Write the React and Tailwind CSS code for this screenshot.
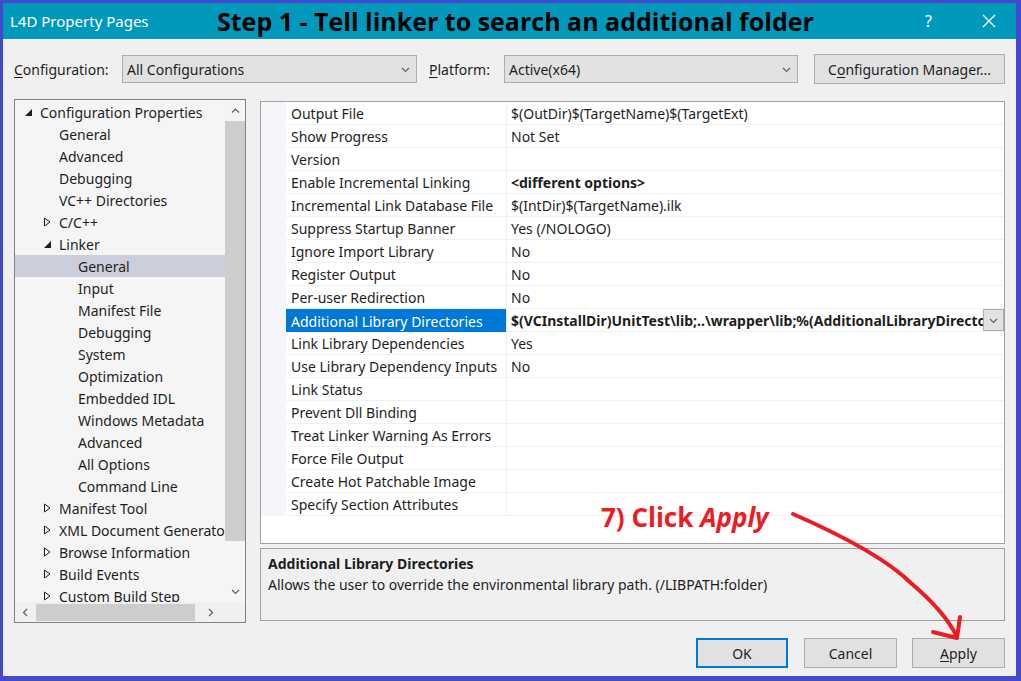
import React from "react";

const tree = [
  { l: 0, t: "Configuration Properties", e: "open" },
  { l: 1, t: "General" },
  { l: 1, t: "Advanced" },
  { l: 1, t: "Debugging" },
  { l: 1, t: "VC++ Directories" },
  { l: 1, t: "C/C++", e: "closed" },
  { l: 1, t: "Linker", e: "open" },
  { l: 2, t: "General", sel: true },
  { l: 2, t: "Input" },
  { l: 2, t: "Manifest File" },
  { l: 2, t: "Debugging" },
  { l: 2, t: "System" },
  { l: 2, t: "Optimization" },
  { l: 2, t: "Embedded IDL" },
  { l: 2, t: "Windows Metadata" },
  { l: 2, t: "Advanced" },
  { l: 2, t: "All Options" },
  { l: 2, t: "Command Line" },
  { l: 1, t: "Manifest Tool", e: "closed" },
  { l: 1, t: "XML Document Generator", e: "closed" },
  { l: 1, t: "Browse Information", e: "closed" },
  { l: 1, t: "Build Events", e: "closed" },
  { l: 1, t: "Custom Build Step", e: "closed" },
  { l: 1, t: "Code Analysis", e: "closed" },
];

const indent = { 0: "pl-[9px]", 1: "pl-[28px]", 2: "pl-[47px]" };

const props = [
  ["Output File", "$(OutDir)$(TargetName)$(TargetExt)"],
  ["Show Progress", "Not Set"],
  ["Version", ""],
  ["Enable Incremental Linking", "<different options>", true],
  ["Incremental Link Database File", "$(IntDir)$(TargetName).ilk"],
  ["Suppress Startup Banner", "Yes (/NOLOGO)"],
  ["Ignore Import Library", "No"],
  ["Register Output", "No"],
  ["Per-user Redirection", "No"],
  [
    "Additional Library Directories",
    "$(VCInstallDir)UnitTest\\lib;..\\wrapper\\lib;%(AdditionalLibraryDirectories)",
    true,
    true,
  ],
  ["Link Library Dependencies", "Yes"],
  ["Use Library Dependency Inputs", "No"],
  ["Link Status", ""],
  ["Prevent Dll Binding", ""],
  ["Treat Linker Warning As Errors", ""],
  ["Force File Output", ""],
  ["Create Hot Patchable Image", ""],
  ["Specify Section Attributes", ""],
];

function Chevron({ dir = "down", color = "#606060", size = 9 }) {
  const pts = {
    down: "1,3 4.5,6.5 8,3",
    up: "1,6.5 4.5,3 8,6.5",
    left: "6,1 2.5,4.5 6,8",
    right: "3,1 6.5,4.5 3,8",
  }[dir];
  return (
    <svg width={size} height={size} viewBox="0 0 9 9">
      <polyline points={pts} fill="none" stroke={color} strokeWidth="1.2" />
    </svg>
  );
}

function Expander({ kind }) {
  if (kind === "open")
    return (
      <svg width="9" height="9" viewBox="0 0 9 9">
        <polygon points="8,1 8,8 1,8" fill="#1e1e1e" />
      </svg>
    );
  if (kind === "closed")
    return (
      <svg width="9" height="10" viewBox="0 0 9 10">
        <polygon points="1.5,1 7,5 1.5,9" fill="none" stroke="#1e1e1e" strokeWidth="1" />
      </svg>
    );
  return <span className="w-[9px]" />;
}

function Combo({ value, width }) {
  return (
    <div
      className={`${width} h-[28px] bg-[#e1e1e1] border border-[#adadad] flex items-center pl-[4px] pr-[6px] pt-px`}
    >
      <span className="flex-1">{value}</span>
      <Chevron />
    </div>
  );
}

function Button({ children, primary, width = "w-[93px]" }) {
  return (
    <div
      className={`${width} h-[30px] bg-[#e1e1e1] flex items-center justify-center ${
        primary ? "border-2 border-[#0078d7]" : "border border-[#adadad]"
      }`}
    >
      {children}
    </div>
  );
}

export default function App() {
  return (
    <div className="relative w-[1021px] h-[681px] flex flex-col border-l-[3px] border-t-[3px] border-r-[5px] border-b-[5px] border-[#4349cf] text-[14px] text-[#1e1e1e] font-['Noto_Sans','Open_Sans',sans-serif] overflow-hidden">
      {/* title bar */}
      <div className="h-[36px] bg-[#0099bc] flex items-center shrink-0">
        <div className="w-[214px] pl-[7px] text-white text-[15px]">L4D Property Pages</div>
        <div className="text-black font-bold text-[25px] leading-none font-['Open_Sans',sans-serif]">
          Step 1 - Tell linker to search an additional folder
        </div>
        <div className="flex-1" />
        <div className="text-white text-[16px] mr-[50px]">?</div>
        <svg width="14" height="14" viewBox="0 0 14 14" className="mr-[20px]">
          <path d="M1 1 L13 13 M13 1 L1 13" stroke="white" strokeWidth="1.3" />
        </svg>
      </div>

      <div className="flex-1 bg-[#f0f0f0] flex flex-col pl-[11px] pr-[11px]">
        {/* configuration row */}
        <div className="mt-[15px] h-[30px] flex items-center">
          <div className="w-[108px] pt-px">
            <span className="underline underline-offset-2">C</span>onfiguration:
          </div>
          <Combo value="All Configurations" width="w-[295px]" />
          <div className="ml-[12px] w-[75px] pt-px">
            <span className="underline underline-offset-2">P</span>latform:
          </div>
          <Combo value="Active(x64)" width="w-[294px]" />
          <div className="flex-1" />
          <Button width="w-[191px]">
            <span>
              C<span className="underline underline-offset-2">o</span>nfiguration Manager...
            </span>
          </Button>
        </div>

        {/* main area */}
        <div className="mt-[15px] flex">
          {/* tree */}
          <div className="w-[232px] h-[524px] border border-[#828282] bg-[#f5f5f5] flex flex-col">
            <div className="flex-1 flex min-h-0">
              <div className="flex-1 overflow-hidden pt-px">
                {tree.map((n, i) => (
                  <div
                    key={i}
                    className={`h-[22px] flex items-center whitespace-nowrap ${indent[n.l]} ${
                      n.sel ? "bg-[#cccedb]" : ""
                    }`}
                  >
                    <span className="w-[16px] shrink-0 flex items-center">
                      <Expander kind={n.e} />
                    </span>
                    <span>{n.t}</span>
                  </div>
                ))}
              </div>
              <div className="w-[20px] shrink-0 flex flex-col bg-[#f5f5f5]">
                <div className="h-[21px] flex items-center justify-center">
                  <Chevron dir="up" />
                </div>
                <div className="h-[420px] bg-[#cdcdcd]" />
                <div className="flex-1" />
                <div className="h-[21px] flex items-center justify-center">
                  <Chevron dir="down" />
                </div>
              </div>
            </div>
            <div className="h-[20px] flex">
              <div className="flex-1 flex items-center bg-[#f0f0f0]">
                <div className="w-[21px] flex justify-center">
                  <Chevron dir="left" />
                </div>
                <div className="w-[159px] h-[17px] bg-[#cdcdcd]" />
                <div className="flex-1 flex justify-center">
                  <Chevron dir="right" />
                </div>
              </div>
              <div className="w-[20px] bg-[#f0f0f0]" />
            </div>
          </div>

          {/* right column */}
          <div className="ml-[14px] mt-[2px] w-[745px] flex flex-col">
            <div className="h-[443px] border border-[#a0a0a0] bg-white">
              {props.map(([name, val, bold, sel], i) => (
                <div key={i} className="h-[23px] flex">
                  <div className="w-[25px] bg-[#f4f6f9]" />
                  <div
                    className={`w-[221px] pl-[5px] pt-px flex items-center border-r border-[#eef0f4] whitespace-nowrap ${
                      sel ? "bg-[#0078d7] text-white" : "border-b"
                    }`}
                  >
                    {name}
                  </div>
                  <div className="flex-1 flex items-center border-b border-[#eef0f4] min-w-0">
                    <div
                      className={`flex-1 pl-[4px] pt-px whitespace-nowrap overflow-hidden ${
                        bold ? "font-bold" : ""
                      }`}
                    >
                      {val}
                    </div>
                    {sel && (
                      <div className="w-[21px] h-[22px] bg-[#e1e1e1] border border-[#adadad] flex items-center justify-center">
                        <Chevron />
                      </div>
                    )}
                  </div>
                </div>
              ))}
            </div>
            <div className="mt-[4px] h-[73px] border border-[#a0a0a0] bg-[#f0f0f0] pl-[7px] pt-[3px]">
              <div className="font-bold h-[22px] flex items-center">Additional Library Directories</div>
              <div className="h-[20px] flex items-center">
                Allows the user to override the environmental library path. (/LIBPATH:folder)
              </div>
            </div>
          </div>
        </div>

        {/* buttons */}
        <div className="mt-[15px] flex justify-end">
          <Button primary width="w-[92px]">OK</Button>
          <div className="w-[16px]" />
          <Button>Cancel</Button>
          <div className="w-[15px]" />
          <Button>
            <span>
              <span className="underline underline-offset-2">A</span>pply
            </span>
          </Button>
        </div>
      </div>

      {/* annotation */}
      <div className="absolute left-[598px] top-[495px] text-[#ec1c24] font-bold text-[26px] font-['Open_Sans',sans-serif]">
        7) Click <span className="italic">Apply</span>
      </div>
      <svg
        className="absolute left-[-3px] top-[-3px] pointer-events-none"
        width="1021"
        height="681"
        viewBox="0 0 1021 681"
      >
        <path
          d="M793 514 Q 880 552 912 584 Q 945 612 957 637"
          fill="none"
          stroke="#ec1c24"
          strokeWidth="4"
          strokeLinecap="round"
        />
        <path
          d="M933 632 L957 638 L960 617"
          fill="none"
          stroke="#ec1c24"
          strokeWidth="4"
          strokeLinecap="round"
          strokeLinejoin="round"
        />
      </svg>
    </div>
  );
}
